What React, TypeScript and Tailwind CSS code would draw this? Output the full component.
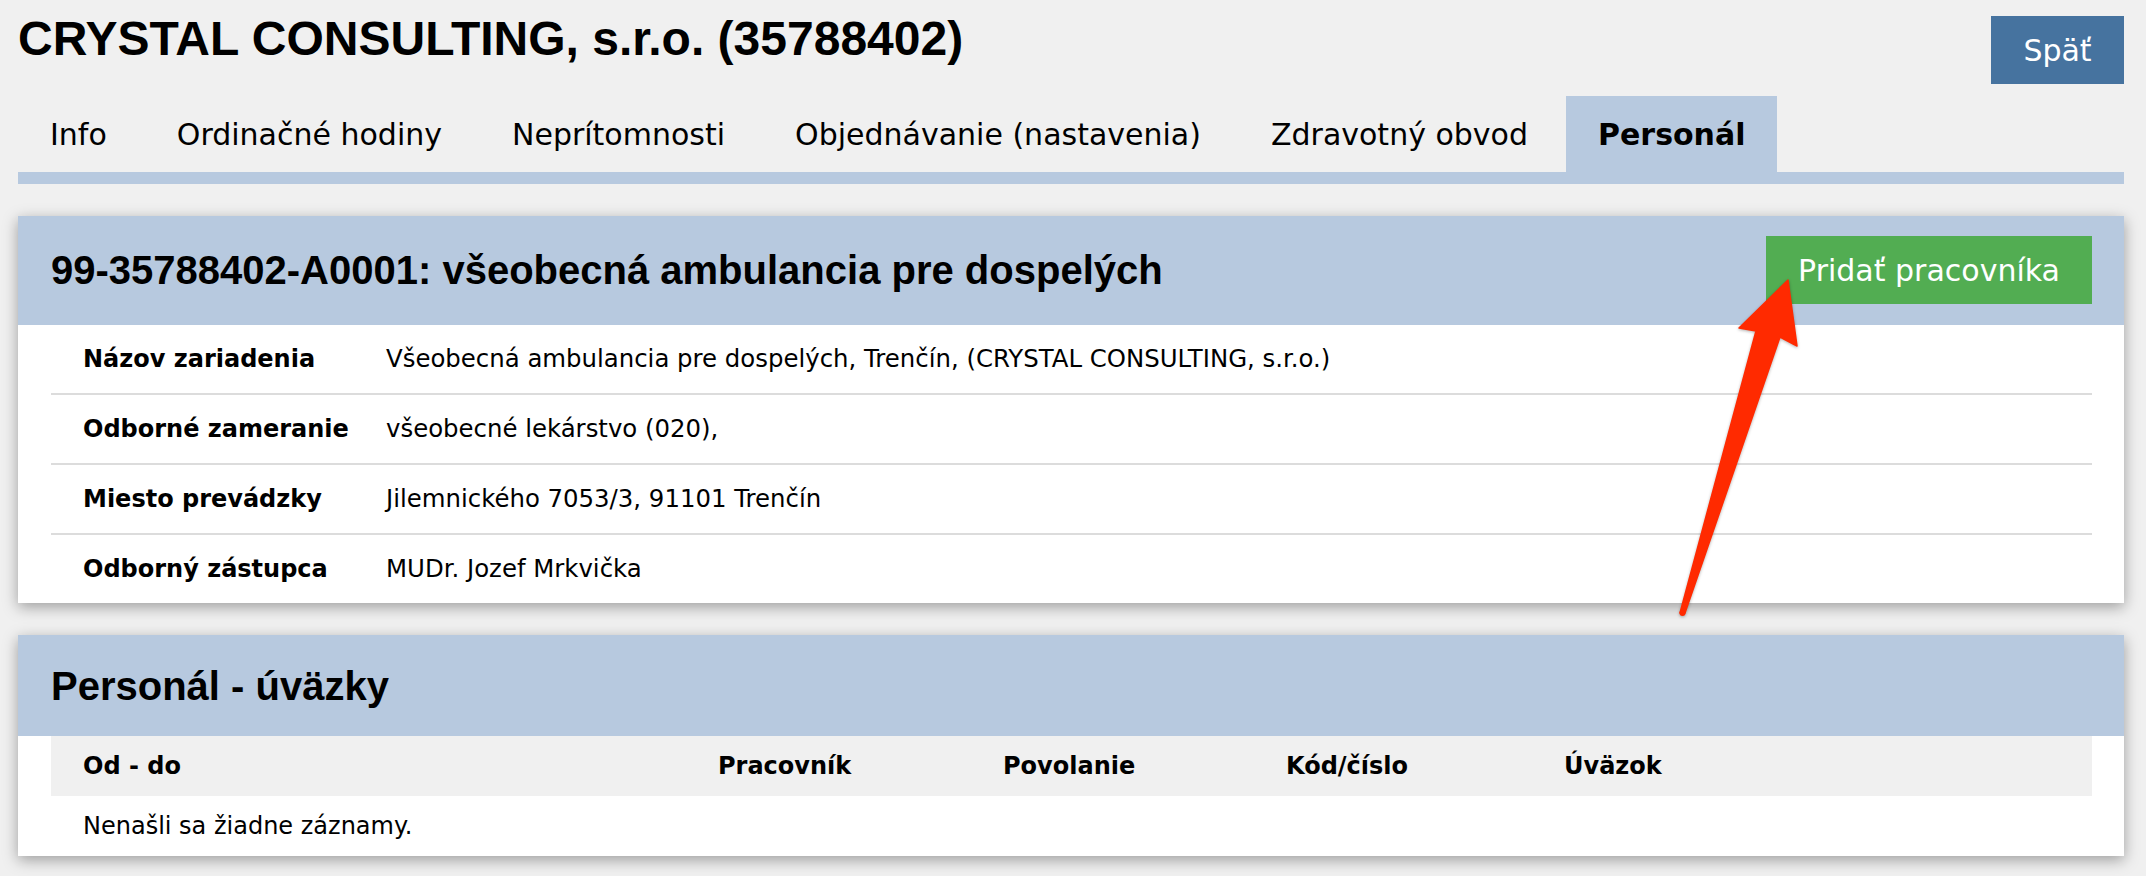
import React from 'react';

const TABS = ['Info', 'Ordinačné hodiny', 'Neprítomnosti', 'Objednávanie (nastavenia)', 'Zdravotný obvod', 'Personál'];

const DETAILS: [string, string][] = [
  ['Názov zariadenia', 'Všeobecná ambulancia pre dospelých, Trenčín, (CRYSTAL CONSULTING, s.r.o.)'],
  ['Odborné zameranie', 'všeobecné lekárstvo (020),'],
  ['Miesto prevádzky', 'Jilemnického 7053/3, 91101 Trenčín'],
  ['Odborný zástupca', 'MUDr. Jozef Mrkvička'],
];

const COLUMNS = ['Od - do', 'Pracovník', 'Povolanie', 'Kód/číslo', 'Úväzok'];

export default function App() {
  return (
    <div className="relative min-h-screen bg-[#f0f0f0] pl-[18px] pr-[22px] pb-[20px] font-['DejaVu_Sans',Verdana,sans-serif] text-black">
      {/* page header */}
      <div className="flex items-start justify-between h-[96px]">
        <h1 className="pt-[15px] text-[48px] leading-none font-bold font-['Liberation_Sans',Arial,sans-serif]">
          CRYSTAL CONSULTING, s.r.o. (35788402)
        </h1>
        <button className="mt-[16px] h-[68px] w-[133px] bg-[#46739f] text-white text-[30px] flex items-center justify-center">
          Späť
        </button>
      </div>

      {/* tabs */}
      <div className="flex gap-[6px] h-[76px]">
        {TABS.map((tab) => (
          <div
            key={tab}
            className={`px-[32px] flex items-center text-[30px] ${tab === 'Personál' ? 'bg-[#b7c9df] font-bold' : ''}`}
          >
            {tab}
          </div>
        ))}
      </div>
      <div className="h-[12px] bg-[#b7c9df]" />

      {/* facility card */}
      <div className="mt-[32px] bg-white shadow-[0_4px_14px_rgba(0,0,0,0.35)]">
        <div className="flex items-center justify-between bg-[#b7c9df] pl-[33px] pr-[32px] pt-[20px] pb-[21px]">
          <h2 className="text-[40px] leading-none font-bold font-['Liberation_Sans',Arial,sans-serif]">
            99-35788402-A0001: všeobecná ambulancia pre dospelých
          </h2>
          <button className="h-[68px] px-[32px] bg-[#52ad52] text-white text-[30px] flex items-center">
            Pridať pracovníka
          </button>
        </div>
        <div className="pl-[33px] pr-[32px]">
          {DETAILS.map(([label, value], i) => (
            <div
              key={label}
              className={`flex items-center h-[68px] ${i < DETAILS.length - 1 ? 'border-b-2 border-[#dcdcdc] h-[70px]' : ''}`}
            >
              <div className="w-[335px] pl-[32px] text-[24px] font-bold">{label}</div>
              <div className="text-[24.4px]">{value}</div>
            </div>
          ))}
        </div>
      </div>

      {/* staff card */}
      <div className="mt-[32px] bg-white shadow-[0_4px_14px_rgba(0,0,0,0.35)]">
        <div className="flex items-center h-[101px] bg-[#b7c9df] pl-[33px]">
          <h2 className="text-[40px] leading-none font-bold font-['Liberation_Sans',Arial,sans-serif]">
            Personál - úväzky
          </h2>
        </div>
        <div className="pl-[33px] pr-[32px]">
          <div className="grid grid-cols-[635px_285px_283px_278px_1fr] h-[60px] items-center bg-[#f0f0f0] text-[24px] font-bold">
            {COLUMNS.map((col) => (
              <div key={col} className="pl-[32px]">{col}</div>
            ))}
          </div>
          <div className="h-[60px] flex items-center pl-[32px] text-[24px]">
            Nenašli sa žiadne záznamy.
          </div>
        </div>
      </div>

      {/* annotation arrow */}
      <svg
        className="absolute top-0 left-0 pointer-events-none"
        width="2146"
        height="876"
        viewBox="0 0 2146 876"
      >
        <g style={{ filter: 'drop-shadow(0 1px 1.5px rgba(0,0,0,0.3))' }}>
          <polygon
            points="1788,280 1797,346 1780,337 1685,613 1680,613 1756,331 1739,328"
            fill="#ff2a00"
            stroke="#ff2a00"
            strokeWidth="1.5"
            strokeLinejoin="round"
          />
          <circle cx="1682.5" cy="613" r="3" fill="#ff2a00" />
        </g>
      </svg>
    </div>
  );
}
